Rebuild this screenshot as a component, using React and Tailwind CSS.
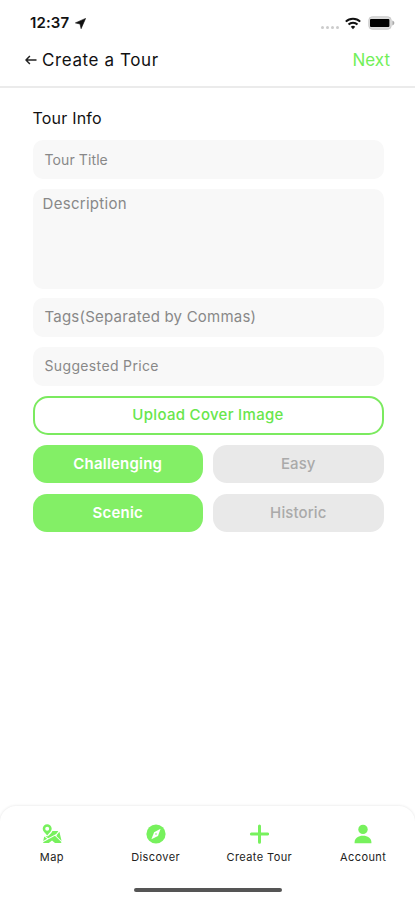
import React from "react";

function LocationArrow() {
  return (
    <svg className="w-[11px] h-[11px]" viewBox="0 0 11 11" fill="#111">
      <path d="M10.6.4 0.4 4.9 5 6 6.1 10.7Z" stroke="#111" strokeWidth=".6" strokeLinejoin="round" />
    </svg>
  );
}

function WifiIcon() {
  return (
    <svg className="w-[16px] h-[13px]" viewBox="0 0 16 13" fill="none" stroke="#111" strokeWidth="2">
      <path d="M.8 4.6a10.3 10.3 0 0 1 14.4 0" />
      <path d="M3.5 7.5a6.4 6.4 0 0 1 9 0" />
      <path d="M5.8 9.7a3.2 3.2 0 0 1 4.4 0L8 12.3Z" fill="#111" stroke="none" />
    </svg>
  );
}

function BatteryIcon() {
  return (
    <svg className="w-[27px] h-[14px]" viewBox="0 0 27 14">
      <rect x=".8" y=".8" width="22.4" height="12.4" rx="3.4" fill="#dcdcdc" stroke="#cacaca" strokeWidth="1" />
      <rect x="2" y="3" width="19.4" height="8" rx="1" fill="#000" />
      <path d="M24.3 4.6c1.4.4 2 1.3 2 2.4s-.6 2-2 2.4Z" fill="#aaa" />
    </svg>
  );
}

function BackArrow() {
  return (
    <svg className="w-[12px] h-[10px] mb-[2px]" viewBox="0 0 12 10" fill="none" stroke="#222" strokeWidth="1.5" strokeLinejoin="round">
      <path d="M11.5 5H1M4.9 1 1 5l3.9 4" />
    </svg>
  );
}

function MapIcon() {
  return (
    <svg className="w-5 h-5" viewBox="0 0 20 20" fill="#77f15d">
      <path fillRule="evenodd" d="M5.2.3A4.5 4.5 0 0 0 .7 4.7c0 2.3 2.2 4 4.5 6.7 2.3-2.7 4.5-4.4 4.5-6.7A4.5 4.5 0 0 0 5.2.3Zm0 2.4a2 2 0 1 1 0 4 2 2 0 0 1 0-4Z" />
      <path d="M10.4 7h5.4q.6 0 .3.5L14.2 10 6.2 14.3 3.4 12.3h2.4c2-1.8 3.8-3.4 4.6-5.3Z" />
      <path d="M17.4 7.8 19.6 16.9 14.6 12.3V11.2ZM2.2 12.6 5.1 14.8 1.2 17Z" />
      <path d="M1 18.2 12.9 11.8 19.4 17.9Q19.6 19 18.5 19H13L10 16.4 6.8 19H2Q1 19 1 18.2Z" />
    </svg>
  );
}

function CompassIcon() {
  return (
    <svg className="w-5 h-5" viewBox="0 0 20 20">
      <circle cx="10" cy="10" r="9.6" fill="#77f15d" />
      <path d="M14.6 4.7 12 12l-6.6 3.3L8.1 8.2Z" fill="#fff" />
      <circle cx="10" cy="10" r=".8" fill="#77f15d" />
    </svg>
  );
}

function PlusIcon() {
  return (
    <svg className="w-5 h-5" viewBox="0 0 20 20" stroke="#77f15d" strokeWidth="3" strokeLinecap="round">
      <path d="M10.5 2v16.2M2.4 10h16.2" />
    </svg>
  );
}

function PersonIcon() {
  return (
    <svg className="w-5 h-5" viewBox="0 0 20 20" fill="#77f15d">
      <circle cx="10" cy="5.4" r="4.7" />
      <path d="M1.6 19.2v-1.1c0-3.7 3.7-6.4 8.4-6.4s8.4 2.7 8.4 6.4v1.1Z" />
    </svg>
  );
}

function Field({ label, text }) {
  return (
    <div className="h-[39px] rounded-[10px] bg-[#f8f8f8] pl-3 pb-px flex items-center text-[#888]">
      <span className={text}>{label}</span>
    </div>
  );
}

function Tag({ label, active }) {
  return (
    <button
      className={
        active
          ? "h-[38px] pt-px rounded-[14px] bg-[#83ef66] text-white text-[15px] tracking-[0.2px] font-semibold"
          : "h-[38px] pt-px rounded-[14px] bg-[#e9e9e9] text-[#aaa] text-[15px] tracking-[0.1px] font-medium"
      }
    >
      {label}
    </button>
  );
}

function NavItem({ icon, label }) {
  return (
    <div className="flex-1 flex flex-col items-center gap-[5px]">
      {icon}
      <span className="text-[11px] tracking-[0.4px] leading-4 text-[#222] whitespace-nowrap">{label}</span>
    </div>
  );
}

function App() {
  return (
    <div className="w-[415px] h-[900px] bg-white flex flex-col overflow-hidden font-['Inter',sans-serif] text-[#111]">
      <div className="h-[44px] pt-[2px] pl-[30px] pr-[20px] flex items-center justify-between">
        <div className="flex items-center gap-[6px]">
          <span className="text-[15px] font-semibold tracking-[0.1px]">12:37</span>
          <LocationArrow />
        </div>
        <div className="flex items-center">
          <div className="flex gap-[2px] pt-[8px] mr-[6px]">
            <i className="w-[3px] h-[3px] rounded-full bg-[#ccc]" />
            <i className="w-[3px] h-[3px] rounded-full bg-[#ccc]" />
            <i className="w-[3px] h-[3px] rounded-full bg-[#ccc]" />
            <i className="w-[3px] h-[3px] rounded-full bg-[#ccc]" />
          </div>
          <WifiIcon />
          <span className="w-[7px]" />
          <BatteryIcon />
        </div>
      </div>
      <header className="h-[44px] pb-[9px] pl-[25px] pr-[25px] flex items-center justify-between border-b-2 border-[#ebebeb]">
        <div className="flex items-center gap-[5px]">
          <BackArrow />
          <h1 className="text-[17px] tracking-[0.6px]">Create a Tour</h1>
        </div>
        <button className="text-[17px] text-[#72ef58]">Next</button>
      </header>

      <main className="flex-1 pl-[32.5px] pr-[31.5px] pt-[18px]">
        <h2 className="text-[16px] leading-6 tracking-[0.2px]">Tour Info</h2>
        <div className="flex flex-col gap-[9.5px] mt-[10px]">
          <Field label="Tour Title" text="text-[14px] tracking-[0.1px]" />
          <div className="h-[100px] rounded-[10px] bg-[#f8f8f8] px-[10px] pt-[4px] text-[15px] tracking-[0.3px] text-[#888]">
            Description
          </div>
          <Field label="Tags(Separated by Commas)" text="text-[15px] tracking-[0.22px] pt-px" />
          <Field label="Suggested Price" text="text-[14px] tracking-[0.35px]" />
        </div>
        <button className="mt-[10px] w-full h-[39px] rounded-[15px] border-2 border-[#7bea5f] text-[#68e64c] text-[15px] tracking-[0.3px] font-medium">
          Upload Cover Image
        </button>
        <div className="grid grid-cols-2 gap-x-[10px] gap-y-[11px] mt-[10px]">
          <Tag label="Challenging" active />
          <Tag label="Easy" />
          <Tag label="Scenic" active />
          <Tag label="Historic" />
        </div>
      </main>

      <nav className="h-[94px] pt-[18px] flex flex-col justify-between rounded-t-[16px] shadow-[0_0_3px_rgba(0,0,0,0.12)]">
        <div className="flex">
          <NavItem icon={<MapIcon />} label="Map" />
          <NavItem icon={<CompassIcon />} label="Discover" />
          <NavItem icon={<PlusIcon />} label="Create Tour" />
          <NavItem icon={<PersonIcon />} label="Account" />
        </div>
        <div className="self-center w-[148px] h-[4px] mb-[8px] rounded-full bg-[#555]" />
      </nav>
    </div>
  );
}

export default App;
